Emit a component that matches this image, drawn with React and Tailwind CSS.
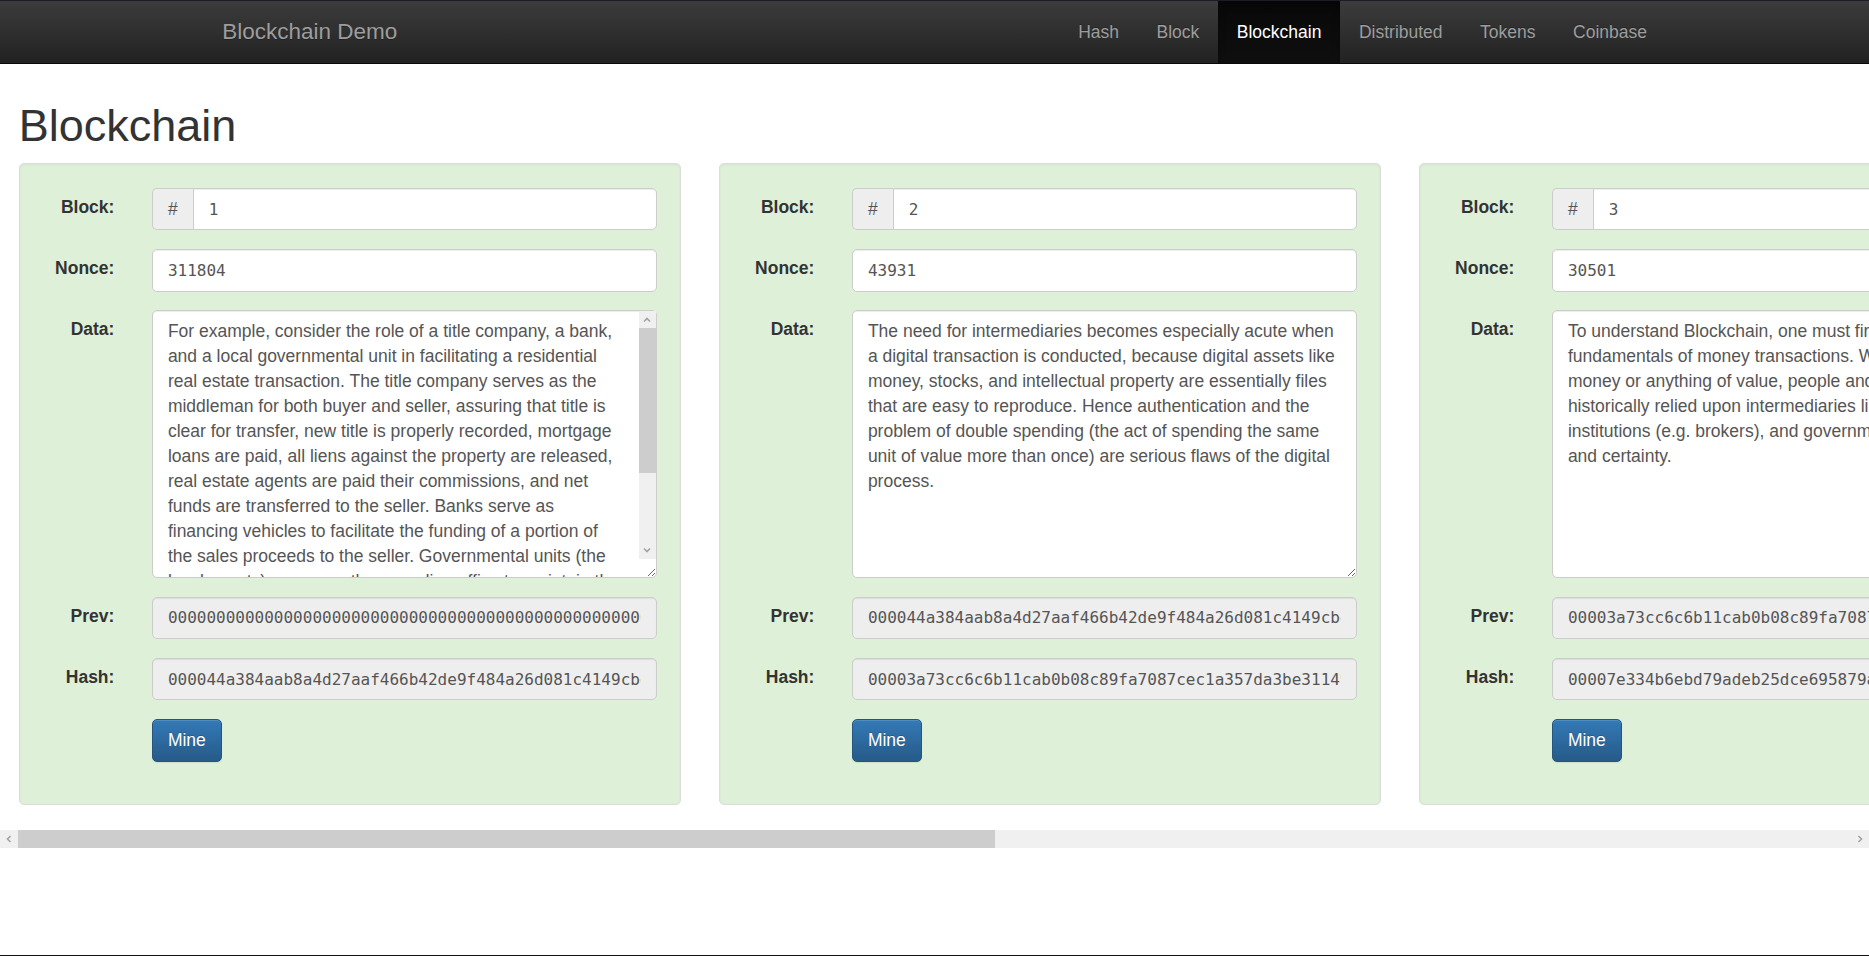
import React, { useState } from "react";

const NAV = ["Hash", "Block", "Blockchain", "Distributed", "Tokens", "Coinbase"];

const blocks = [
  {
    n: 1,
    nonce: "311804",
    data: "For example, consider the role of a title company, a bank, and a local governmental unit in facilitating a residential real estate transaction. The title company serves as the middleman for both buyer and seller, assuring that title is clear for transfer, new title is properly recorded, mortgage loans are paid, all liens against the property are released, real estate agents are paid their commissions, and net funds are transferred to the seller. Banks serve as financing vehicles to facilitate the funding of a portion of the sales proceeds to the seller. Governmental units (the local county) serves as the recording office to maintain the public record of ownership, collect the transfer taxes and make sure that the new title and the mortgage are properly filed. Each intermediary adds cost and delay, and each one must be trusted by every party to the transaction.",
    prev: "0000000000000000000000000000000000000000000000000000000000000000",
    hash: "000044a384aab8a4d27aaf466b42de9f484a26d081c4149cbe0a4f1b2d3c86f7",
  },
  {
    n: 2,
    nonce: "43931",
    data: "The need for intermediaries becomes especially acute when a digital transaction is conducted, because digital assets like money, stocks, and intellectual property are essentially files that are easy to reproduce. Hence authentication and the problem of double spending (the act of spending the same unit of value more than once) are serious flaws of the digital process.",
    prev: "000044a384aab8a4d27aaf466b42de9f484a26d081c4149cbe0a4f1b2d3c86f7",
    hash: "00003a73cc6c6b11cab0b08c89fa7087cec1a357da3be31149d2e0f6b7a1c58e",
  },
  {
    n: 3,
    nonce: "30501",
    data: "To understand Blockchain, one must first understand the fundamentals of money transactions. When transferring money or anything of value, people and businesses have historically relied upon intermediaries like financial institutions (e.g. brokers), and government to ensure trust and certainty.",
    prev: "00003a73cc6c6b11cab0b08c89fa7087cec1a357da3be31149d2e0f6b7a1c58e",
    hash: "00007e334b6ebd79adeb25dce695879a2c4f01d8e6b3975c0e2a4f81b6d9c3e7",
  },
  {
    n: 4,
    nonce: "118263",
    data: "Blockchain technology allows parties who do not know or trust each other to exchange value directly, because every participant keeps a copy of the same ledger and any change to a past record breaks the chain of hashes that follows it.",
    prev: "00007e334b6ebd79adeb25dce695879a2c4f01d8e6b3975c0e2a4f81b6d9c3e7",
    hash: "0000d8c1f5a2b3e49076c1de8f2a4b5c6d7e8f901a2b3c4d5e6f708192a3b4c5",
  },
  {
    n: 5,
    nonce: "72548",
    data: "Mining is the work of finding a nonce that makes the hash of the block begin with a number of zeros. Once found, the block is signed and the next block can point to it.",
    prev: "0000d8c1f5a2b3e49076c1de8f2a4b5c6d7e8f901a2b3c4d5e6f708192a3b4c5",
    hash: "0000b7e21c94f0a3d5e6c7b8a9f0e1d2c3b4a5968778695a4b3c2d1e0f9e8d7c",
  },
];

const inputBase =
  "h-[42.5px] w-full border border-[#ccc] px-[15px] py-[7.5px] font-['DejaVu_Sans_Mono',monospace] text-[16px] text-[#555] shadow-[inset_0_1px_1px_rgba(0,0,0,0.075)] outline-none";

function Chevron({ dir }) {
  const d = {
    up: "M2 6.5 L5 3.5 L8 6.5",
    down: "M2 3.5 L5 6.5 L8 3.5",
    left: "M6.5 2 L3.5 5 L6.5 8",
    right: "M3.5 2 L6.5 5 L3.5 8",
  }[dir];
  return (
    <svg width="10" height="10" viewBox="0 0 10 10">
      <path d={d} fill="none" stroke="#a3a3a3" strokeWidth="1.6" />
    </svg>
  );
}

function Row({ label, children }) {
  return (
    <div className="mx-[-18.75px] mb-[18.75px] flex">
      <label className="w-[108.4px] shrink-0 px-[18.75px] pt-[7px] text-right font-bold leading-[25px] text-[#333]">
        {label}
      </label>
      <div className="flex-1 px-[18.75px]">{children}</div>
    </div>
  );
}

function DataField({ value, overflowing }) {
  return (
    <div className="relative">
      <textarea
        rows={10}
        spellCheck={false}
        defaultValue={value}
        className={`block h-[267.5px] w-full resize-y rounded-[5px] border border-[#ccc] bg-white py-[7.5px] pl-[15px] text-[17.5px] leading-[25px] text-[#555] shadow-[inset_0_1px_1px_rgba(0,0,0,0.075)] outline-none ${
          overflowing ? "pr-[32px]" : "pr-[15px]"
        }`}
      />
      {overflowing && (
        <div className="pointer-events-none absolute top-[1px] right-[1px] bottom-[19px] flex w-[17px] flex-col bg-[#f0f0f0]">
          <div className="flex h-[17px] items-center justify-center">
            <Chevron dir="up" />
          </div>
          <div className="h-[145px] bg-[#cdcdcd]" />
          <div className="flex-1" />
          <div className="flex h-[17px] items-center justify-center">
            <Chevron dir="down" />
          </div>
        </div>
      )}
    </div>
  );
}

function BlockCard({ block }) {
  return (
    <div className="w-[662.5px] shrink-0 rounded-[5px] border border-[#dcdcdc] bg-[#dff0d8] p-[23.75px] shadow-[inset_0_1px_3px_rgba(0,0,0,0.05)]">
      <Row label="Block:">
        <div className="flex">
          <span className="flex h-[42.5px] items-center rounded-l-[5px] border border-r-0 border-[#ccc] bg-[#eee] px-[15px] text-[17.5px] text-[#555]">
            #
          </span>
          <input
            type="text"
            defaultValue={block.n}
            className={`${inputBase} rounded-r-[5px] bg-white`}
          />
        </div>
      </Row>
      <Row label="Nonce:">
        <input
          type="text"
          defaultValue={block.nonce}
          className={`${inputBase} rounded-[5px] bg-white`}
        />
      </Row>
      <Row label="Data:">
        <DataField value={block.data} overflowing={block.n === 1} />
      </Row>
      <Row label="Prev:">
        <input
          type="text"
          readOnly
          defaultValue={block.prev}
          className={`${inputBase} rounded-[5px] bg-[#eee]`}
        />
      </Row>
      <Row label="Hash:">
        <input
          type="text"
          readOnly
          defaultValue={block.hash}
          className={`${inputBase} rounded-[5px] bg-[#eee]`}
        />
      </Row>
      <Row label="">
        <button className="h-[42.5px] rounded-[5px] border border-[#245580] bg-gradient-to-b from-[#337ab7] to-[#265a88] px-[15px] text-[17.5px] text-white shadow-[inset_0_1px_0_rgba(255,255,255,0.15),0_1px_1px_rgba(0,0,0,0.075)] [text-shadow:0_-1px_0_rgba(0,0,0,0.2)]">
          Mine
        </button>
      </Row>
    </div>
  );
}

export default function App() {
  const [scroll, setScroll] = useState(0);

  const handleScroll = (e) => {
    const el = e.currentTarget;
    const max = el.scrollWidth - el.clientWidth;
    setScroll(max > 0 ? el.scrollLeft / max : 0);
  };

  return (
    <div className="min-h-screen border-b border-[#111] bg-white font-['Liberation_Sans',Arial,sans-serif] text-[17.5px] text-[#333]">
      {/* Navbar */}
      <nav className="h-[64px] border-t border-b border-t-[#1c1c28] border-b-[#080808] bg-gradient-to-b from-[#3c3c3c] to-[#222]">
        <div className="mx-auto flex h-full w-[1462.5px] justify-between">
          <a className="flex items-center px-[19px] text-[22.5px] text-[#9d9d9d] [text-shadow:0_1px_0_rgba(0,0,0,0.25)]">
            Blockchain Demo
          </a>
          <ul className="flex">
            {NAV.map((item) => (
              <li key={item} className="flex">
                <a
                  className={
                    item === "Blockchain"
                      ? "flex items-center bg-gradient-to-b from-[#080808] to-[#0f0f0f] px-[18.75px] text-white shadow-[inset_0_3px_9px_rgba(0,0,0,0.25)]"
                      : "flex items-center px-[18.75px] text-[#9d9d9d] [text-shadow:0_-1px_0_rgba(0,0,0,0.25)]"
                  }
                >
                  {item}
                </a>
              </li>
            ))}
          </ul>
        </div>
      </nav>

      {/* Page */}
      <div className="px-[18.75px]">
        <h1 className="mt-[37px] mb-[12.5px] text-[45px] leading-[49.5px] font-medium text-[#333]">
          Blockchain
        </h1>
      </div>

      <div
        onScroll={handleScroll}
        className="overflow-x-auto overflow-y-hidden [scrollbar-width:none]"
      >
        <div className="flex w-max gap-[37.5px] px-[18.75px] pb-[25px]">
          {blocks.map((b) => (
            <BlockCard key={b.n} block={b} />
          ))}
        </div>
      </div>

      {/* Horizontal scrollbar */}
      <div className="flex h-[18px] bg-[#f0f0f0]">
        <div className="flex w-[18px] items-center justify-center">
          <Chevron dir="left" />
        </div>
        <div className="relative flex-1">
          <div
            className="absolute top-0 h-full w-[977px] bg-[#cdcdcd]"
            style={{ left: `${scroll * (1833 - 977)}px` }}
          />
        </div>
        <div className="flex w-[18px] items-center justify-center">
          <Chevron dir="right" />
        </div>
      </div>
    </div>
  );
}
